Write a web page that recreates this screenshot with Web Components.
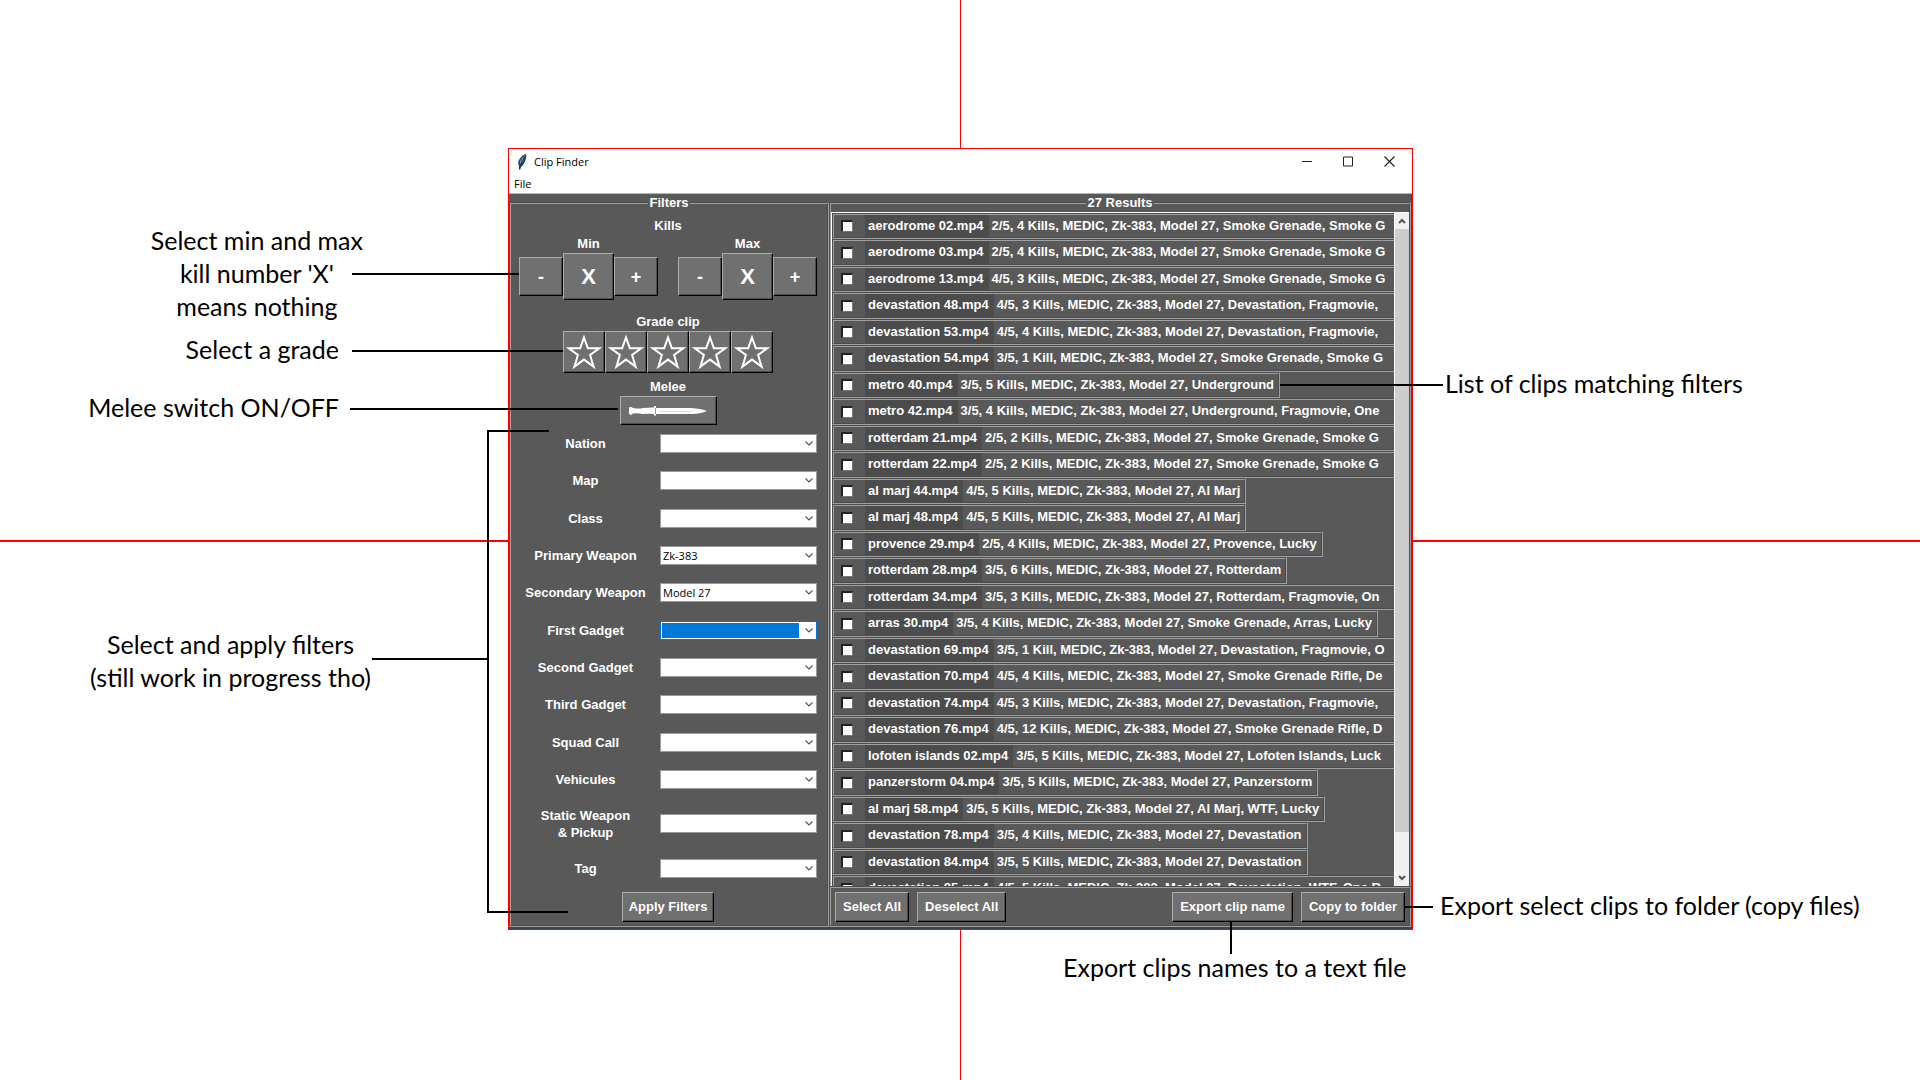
<!DOCTYPE html>
<html lang="en">
<head>
<meta charset="utf-8">
<title>Clip Finder</title>
<style>
html, body { margin: 0; background: #fff; }
</style>
</head>
<body>
<guide-page></guide-page>
<script>
const define = (name, html, setup) => {
  const t = document.createElement('template');
  t.innerHTML = html;
  customElements.define(name, class extends HTMLElement {
    connectedCallback() {
      if (this.shadowRoot) return;
      this.attachShadow({ mode: 'open' }).append(t.content.cloneNode(true));
      if (setup) setup.call(this, this.shadowRoot);
    }
  });
};

/* Raised push button */
define('raised-button', `
<style>
:host { display: flex; }
button {
  flex: 1; display: flex; align-items: center; justify-content: center;
  box-sizing: border-box; height: var(--h, 30px); padding: 0 var(--pad, 7px);
  border: 1px solid; border-color: #adadad #000 #000 #adadad;
  box-shadow: inset -1px -1px #4b4b4b;
  background: #707070; color: #fff; font: inherit; white-space: nowrap;
}
</style>
<button type="button"><slot></slot></button>`, function (root) {
  const l = this.getAttribute('label');
  if (l) root.querySelector('button').setAttribute('aria-label', l);
});

/* Minus / value / plus */
define('kill-stepper', `
<style>
:host { display: flex; flex-direction: column; align-items: center; }
span { font-size: 13px; line-height: 18px; }
div { display: flex; align-items: center; font-size: 18px; }
raised-button { width: 44px; --h: 39px; }
.value { width: 51px; --h: 47px; font-size: 22px; }
</style>
<span><slot></slot></span>
<div><raised-button>-</raised-button><raised-button class="value">X</raised-button><raised-button>+</raised-button></div>`);

define('grade-star', `
<style>
:host { display: block; width: 42px; }
raised-button { --h: 42px; --pad: 0; }
svg { display: block; flex: none; }
</style>
<raised-button label="Grade"><svg width="36" height="36" viewBox="0 0 36 36" fill="none" stroke="#fff" stroke-width="2"><path d="M18 3.500 21.800 14.200H33.300L24.100 21 27.600 32.600 18 25.600 8.400 32.600 11.900 21 2.700 14.200H14.200Z"/></svg></raised-button>`);

/* Label with a drop-down */
define('filter-row', `
<style>
:host { display: grid; grid-template-columns: minmax(0, 1fr) 157px; align-items: center; min-height: 37px; }
label { text-align: center; line-height: 17px; white-space: pre-line; }
.combo { display: grid; height: 19px; align-items: stretch; }
.combo > * { grid-area: 1 / 1; }
select {
  appearance: none; width: 100%; box-sizing: border-box; height: 19px; padding: 0 20px 0 2px;
  border: 1px solid #9a9a9a; border-radius: 0; background: #fff; color: #000; outline: none;
  font: 11px "Open Sans", "Noto Sans", sans-serif;
}
svg { justify-self: end; align-self: center; margin-right: 4px; pointer-events: none; }
:host([active]) select {
  border-color: #0078d7; padding: 0;
  background: linear-gradient(#0078d7, #0078d7) 1px 1px / calc(100% - 18px) calc(100% - 2px) no-repeat #fff;
}
</style>
<label for="s"></label>
<div class="combo"><select id="s"><option></option></select>
<svg width="8" height="5" viewBox="0 0 8 5" fill="none" stroke="#555" stroke-width="1.200"><path d="M.5.5 4 4 7.500.5"/></svg></div>`, function (root) {
  root.querySelector('label').textContent = this.getAttribute('label');
  root.querySelector('option').textContent = this.getAttribute('value') || '';
});

define('filter-panel', `
<style>
:host { display: flex; }
fieldset {
  flex: 1; min-width: 0; margin: 0; padding: 0; border: 2px groove #a0a0a0; box-sizing: border-box;
}
.content { display: flex; flex-direction: column; padding: 0 10px 3px 0; }
legend, h2 { margin: 0; font-size: 13px; font-weight: bold; line-height: 16px; text-align: center; }
legend { margin: 0 auto; padding: 0 1px; }
.top { display: flex; flex-direction: column; align-items: center; padding-left: 8px; }
.steppers { display: flex; justify-content: space-between; align-self: stretch; }
.kills { padding-top: 6px; line-height: 18px; }
.grade { padding: 14px 0 1px; }
.stars { display: flex; }
.melee { padding: 6px 0 1px; }
.knife { width: 97px; --h: 29px; }
filter-row:nth-child(3n) { min-height: 38px; }
filter-row.tall { min-height: 51px; }
.apply { align-self: center; margin-left: 8px; margin-top: 5px; width: 92px; --pad: 4px; }
</style>
<fieldset><legend>Filters</legend><div class="content">
<div class="top">
  <h2 class="kills">Kills</h2>
  <div class="steppers"><kill-stepper>Min</kill-stepper><kill-stepper>Max</kill-stepper></div>
  <h2 class="grade">Grade clip</h2>
  <div class="stars"><grade-star></grade-star><grade-star></grade-star><grade-star></grade-star><grade-star></grade-star><grade-star></grade-star></div>
  <h2 class="melee">Melee</h2>
  <raised-button class="knife" label="Melee"><svg width="78" height="10" viewBox="0 0 78 10"><path fill="#fff" d="M0 1.500Q2 .5 4 2 10 3 14 2L25 1.500V0H27V2H62Q72 2.500 78 5 72 8 62 8H27V9.500H25V8Q19 7.500 14 8 8 7 4 7.500L2 9 0 8Z"/><path stroke="#ddd" fill="none" d="M30 5.500H64"/><path stroke="#999" fill="none" d="M26.500 2V8"/></svg></raised-button>
</div>
<div class="rows">
  <filter-row label="Nation"></filter-row>
  <filter-row label="Map"></filter-row>
  <filter-row label="Class"></filter-row>
  <filter-row label="Primary Weapon" value="Zk-383"></filter-row>
  <filter-row label="Secondary Weapon" value="Model 27"></filter-row>
  <filter-row label="First Gadget" active></filter-row>
  <filter-row label="Second Gadget"></filter-row>
  <filter-row label="Third Gadget"></filter-row>
  <filter-row label="Squad Call"></filter-row>
  <filter-row label="Vehicules"></filter-row>
  <filter-row class="tall" label="Static Weapon&#10;&amp; Pickup"></filter-row>
  <filter-row label="Tag"></filter-row>
</div>
<raised-button class="apply">Apply Filters</raised-button>
</div></fieldset>`);

/* One clip in the result list */
define('clip-row', `
<style>
:host { display: flex; width: max-content; box-sizing: border-box; height: 26px; border: 2px groove #a0a0a0; white-space: nowrap; }
:host([long]) { width: calc(100% + 8px); }
label { display: flex; align-items: stretch; line-height: 22px; }
input {
  appearance: none; align-self: center; box-sizing: border-box; width: 12px; height: 12px; margin: 0 12px 0 7px;
  background: #fff; border: 2px solid; border-color: #222 #777 #777 #222; border-right-width: 1px; border-bottom-width: 1px;
}
.name { background: #4c4c4c; padding: 0 5px 0 3px; }
.info { padding: 0 4px 0 3px; }
</style>
<label><input type="checkbox"><span class="name"></span><span class="info"></span></label>`, function (root) {
  root.querySelector('.name').textContent = this.getAttribute('name');
  root.querySelector('.info').textContent = this.getAttribute('info');
});

/* name, score, tags, and whether the row runs past the right edge of the list */
const clips = [
  ['aerodrome 02', '2/5, 4 Kills', 'Smoke Grenade, Smoke G', 1],
  ['aerodrome 03', '2/5, 4 Kills', 'Smoke Grenade, Smoke G', 1],
  ['aerodrome 13', '4/5, 3 Kills', 'Smoke Grenade, Smoke G', 1],
  ['devastation 48', '4/5, 3 Kills', 'Devastation, Fragmovie,', 1],
  ['devastation 53', '4/5, 4 Kills', 'Devastation, Fragmovie,', 1],
  ['devastation 54', '3/5, 1 Kill', 'Smoke Grenade, Smoke G', 1],
  ['metro 40', '3/5, 5 Kills', 'Underground'],
  ['metro 42', '3/5, 4 Kills', 'Underground, Fragmovie, One', 1],
  ['rotterdam 21', '2/5, 2 Kills', 'Smoke Grenade, Smoke G', 1],
  ['rotterdam 22', '2/5, 2 Kills', 'Smoke Grenade, Smoke G', 1],
  ['al marj 44', '4/5, 5 Kills', 'Al Marj'],
  ['al marj 48', '4/5, 5 Kills', 'Al Marj'],
  ['provence 29', '2/5, 4 Kills', 'Provence, Lucky'],
  ['rotterdam 28', '3/5, 6 Kills', 'Rotterdam'],
  ['rotterdam 34', '3/5, 3 Kills', 'Rotterdam, Fragmovie, On', 1],
  ['arras 30', '3/5, 4 Kills', 'Smoke Grenade, Arras, Lucky'],
  ['devastation 69', '3/5, 1 Kill', 'Devastation, Fragmovie, O', 1],
  ['devastation 70', '4/5, 4 Kills', 'Smoke Grenade Rifle, De', 1],
  ['devastation 74', '4/5, 3 Kills', 'Devastation, Fragmovie,', 1],
  ['devastation 76', '4/5, 12 Kills', 'Smoke Grenade Rifle, D', 1],
  ['lofoten islands 02', '3/5, 5 Kills', 'Lofoten Islands, Luck', 1],
  ['panzerstorm 04', '3/5, 5 Kills', 'Panzerstorm'],
  ['al marj 58', '3/5, 5 Kills', 'Al Marj, WTF, Lucky'],
  ['devastation 78', '3/5, 4 Kills', 'Devastation'],
  ['devastation 84', '3/5, 5 Kills', 'Devastation'],
  ['devastation 85', '4/5, 5 Kills', 'Devastation, WTF, One R', 1]
];

define('result-panel', `
<style>
:host { display: flex; flex-direction: column; min-width: 0; }
fieldset {
  flex: 1; min-width: 0; margin: 0; padding: 1px 0 0; border: 2px groove #a0a0a0; border-bottom: 0;
  box-sizing: border-box; display: flex; flex-direction: column;
}
legend { margin: 0 auto; padding: 0 1px; line-height: 16px; }
.view { flex: 1 1 0; min-height: 0; display: flex; border-top: 1px solid #fff; border-left: 1px solid #fff; }
.list { flex: 1; min-width: 0; overflow: hidden; border-right: 1px solid #fff; contain: size; }
clip-row:nth-child(even) { height: 27px; }
.bar { width: 14px; display: flex; flex-direction: column; background: #f0f0f0; }
.bar i { flex: none; height: 16px; display: flex; align-items: center; justify-content: center; }
.track { flex: 1; }
.thumb { height: 94%; background: #cdcdcd; }
.actions { display: flex; gap: 8px; padding: 4px 4px 3px; border: 2px groove #a0a0a0; }
.actions .push { margin-left: auto; }
</style>
<fieldset><legend>27 Results</legend>
<div class="view"><div class="list"></div>
<div class="bar">
  <i><svg width="8" height="6" viewBox="0 0 8 6" fill="none" stroke="#555" stroke-width="2"><path d="M1 5 4 2 7 5"/></svg></i>
  <div class="track"><div class="thumb"></div></div>
  <i><svg width="8" height="6" viewBox="0 0 8 6" fill="none" stroke="#555" stroke-width="2"><path d="M1 1 4 4 7 1"/></svg></i>
</div></div></fieldset>
<div class="actions">
  <raised-button>Select All</raised-button><raised-button>Deselect All</raised-button>
  <raised-button class="push">Export clip name</raised-button><raised-button>Copy to folder</raised-button>
</div>`, function (root) {
  const list = root.querySelector('.list');
  for (const [name, score, tags, long] of clips) {
    const row = document.createElement('clip-row');
    row.setAttribute('name', name + '.mp4');
    row.setAttribute('info', score + ', MEDIC, Zk-383, Model 27, ' + tags);
    row.toggleAttribute('long', !!long);
    list.append(row);
  }
});

define('clip-finder', `
<style>
:host { display: block; border: 1px solid #f00; background: #595959; color: #fff; font: bold 13px/16px "Liberation Sans", Arial, sans-serif; }
header, nav { background: #fff; color: #000; font: 11px/18px "Open Sans", "Noto Sans", sans-serif; display: flex; align-items: center; }
header { height: 25px; padding: 0 17px 0 8px; }
header span { margin-left: 6px; flex: 1; }
.controls { display: flex; gap: 31px; align-items: center; }
nav { height: 19px; padding-left: 5px; border-bottom: 1px solid #b5b5b5; }
nav button { border: 0; padding: 0; background: none; font: inherit; color: inherit; }
.body { display: grid; grid-template-columns: 320fr 582fr; border-right: 1px solid #3e4850; border-bottom: 2px solid #3b4550; padding-top: 1px; gap: 0; }
</style>
<header>
  <svg width="11" height="16" viewBox="0 0 11 16"><path fill="#27415c" d="M8.500 0Q10 1 8.500 6T4 13L3 16 2 15 2.300 12Q0 9 2.500 5T8.500 0Z"/><path fill="#5b9bd5" d="M8 1.500Q3.500 4 2.800 9L3.500 11Q6.500 8 8 1.500Z"/><path fill="none" stroke="#14202c" d="M7.500 3 3 12 2.500 15"/></svg>
  <span>Clip Finder</span>
  <div class="controls">
    <svg width="10" height="11" stroke="#222"><path d="M0 5.500H10"/></svg>
    <svg width="10" height="11" stroke="#222" fill="none"><path d="M.5 1H9.500V10H.5Z"/></svg>
    <svg width="11" height="11" stroke="#222" stroke-width="1.200"><path d="M.5.5 10.500 10.500M10.500.5.5 10.500"/></svg>
  </div>
</header>
<nav><button type="button">File</button></nav>
<div class="body"><filter-panel></filter-panel><result-panel></result-panel></div>`);

/* Caption placed on the canvas around the window; x runs outward from the named side */
define('guide-note', `
<style>
:host { position: absolute; white-space: nowrap; text-align: center; font: 25px/33px Lato, "Open Sans", sans-serif; color: #000; }
</style><slot></slot>`, function () {
  this.style[this.getAttribute('from')] = `calc(100% + ${this.getAttribute('x')}px)`;
  this.style.top = this.getAttribute('y') + 'px';
});

/* Leader line */
define('guide-line', `
<style>:host { position: absolute; background: #000; width: 2px; height: 2px; }</style>`, function () {
  const a = n => this.getAttribute(n);
  this.style[a('from')] = `calc(100% + ${a('x')}px)`;
  this.style.top = a('y') + 'px';
  if (a('w')) this.style.width = a('w') + 'px';
  if (a('h')) this.style.height = a('h') + 'px';
});

define('guide-page', `
<style>
:host { display: grid; grid-template-columns: 508fr 905fr 507fr; align-items: start; position: relative; overflow: hidden; min-height: 100vh; box-sizing: border-box; padding-top: 148px; }
:host::before, :host::after { content: ""; position: absolute; background: #f00; }
:host::before { left: 50%; top: 0; bottom: 0; width: 1px; }
:host::after { top: 50%; left: 0; right: 0; height: 2px; }
main { grid-column: 2; position: relative; z-index: 1; }
</style>
<main>
  <clip-finder></clip-finder>
  <guide-note from="right" x="145" y="76">Select min and max<br>kill number 'X'<br>means nothing</guide-note>
  <guide-note from="right" x="169" y="185">Select a grade</guide-note>
  <guide-note from="right" x="169" y="243">Melee switch ON/OFF</guide-note>
  <guide-note from="right" x="137" y="480">Select and apply filters<br>(still work in progress tho)</guide-note>
  <guide-note from="left" x="32" y="219">List of clips matching filters</guide-note>
  <guide-note from="left" x="27" y="741">Export select clips to folder (copy files)</guide-note>
  <guide-note from="left" x="-350" y="803">Export clips names to a text file</guide-note>
  <guide-line from="right" x="-11" y="125" w="167"></guide-line>
  <guide-line from="right" x="-55" y="202" w="211"></guide-line>
  <guide-line from="right" x="-110" y="260" w="268"></guide-line>
  <guide-line from="right" x="-41" y="282" w="62"></guide-line>
  <guide-line from="right" x="-60" y="763" w="81"></guide-line>
  <guide-line from="right" x="19" y="282" h="483"></guide-line>
  <guide-line from="right" x="20" y="510" w="116"></guide-line>
  <guide-line from="left" x="-133" y="236" w="163"></guide-line>
  <guide-line from="left" x="-8" y="758" w="28"></guide-line>
  <guide-line from="left" x="-183" y="774" h="32"></guide-line>
</main>`);
</script>
</body>
</html>
